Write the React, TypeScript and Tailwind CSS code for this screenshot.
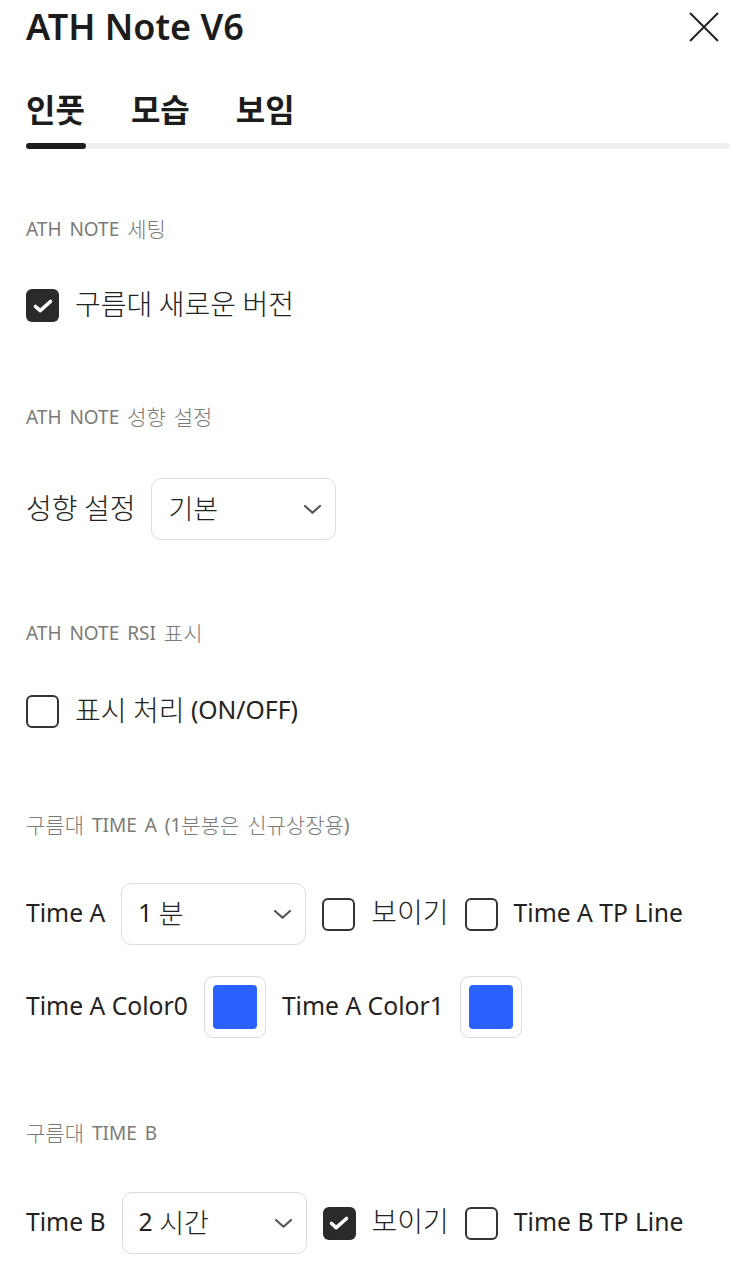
import React from "react";

const font = { fontFamily: '"Noto Sans", "Noto Sans CJK KR", sans-serif' };

// hangul runs get their own size: the latin and korean faces differ in width
function Mixed({ text, ko, en }: { text: string; ko: string; en: string }) {
  const parts = text.split(/([\u3131-\uD79D]+)/).filter((p) => p !== "");
  return (
    <>
      {parts.map((p, i) => (
        <span key={i} className={/[\u3131-\uD79D]/.test(p) ? ko : en}>
          {p}
        </span>
      ))}
    </>
  );
}

function Label({ text }: { text: string }) {
  return (
    <span className="whitespace-pre leading-[33px] text-[#222]">
      <Mixed text={text} ko="align-[-2px] text-[28px] font-light" en="text-[24.7px]" />
    </span>
  );
}

function Check({ on }: { on?: boolean }) {
  if (on) {
    return (
      <span className="flex h-[33px] w-[33px] shrink-0 items-center justify-center rounded-[6px] bg-[#2a2a2a]">
        <svg width="22" height="22" viewBox="0 0 22 22" fill="none">
          <path d="M3.5 11.5 L8.2 15.6 L18.5 6.5" stroke="#fff" strokeWidth="3.6" strokeLinecap="round" strokeLinejoin="round" />
        </svg>
      </span>
    );
  }
  return <span className="block h-[33px] w-[33px] shrink-0 rounded-[6px] border-2 border-[#333333] bg-white" />;
}

function Chevron() {
  return (
    <svg width="19" height="11" viewBox="0 0 19 11" fill="none">
      <path d="M2 2 L9.5 8.8 L17 2" stroke="#555" strokeWidth="2.2" strokeLinecap="round" strokeLinejoin="round" />
    </svg>
  );
}

function Select({ value }: { value: string }) {
  return (
    <div className="flex h-[62px] w-[185px] shrink-0 items-center justify-between rounded-[10px] border border-[#dcdcdc] pl-[16px] pr-[13px]">
      <span className="whitespace-pre text-[#222]">
        <Mixed text={value} ko="align-[-2px] text-[27px] font-light" en="text-[24.7px]" />
      </span>
      <Chevron />
    </div>
  );
}

function Swatch() {
  return (
    <div className="flex h-[62px] w-[62px] shrink-0 items-center justify-center rounded-[9px] border border-[#dcdcdc]">
      <div className="h-[44px] w-[44px] rounded-[4px] bg-[#2962ff]" />
    </div>
  );
}

function Heading({ text, className }: { text: string; className: string }) {
  return (
    <div className={"h-6 whitespace-pre leading-6 text-[#7a7a7a] [word-spacing:3px] " + className}>
      <Mixed text={text} ko="align-[-1px] text-[21px] font-light" en="text-[19px]" />
    </div>
  );
}

function CheckRow({ on, label }: { on?: boolean; label: string }) {
  return (
    <div className="flex h-[33px] items-center gap-4">
      <Check on={on} />
      <Label text={label} />
    </div>
  );
}

export default function App() {
  return (
    <div className="min-h-[1280px] bg-white pl-[26px] pr-[14px]" style={font}>
      <div className="flex h-[54px] items-center justify-between">
        <h1 className="text-[36px] font-semibold leading-[54px] text-[#1c1c1c]">ATH Note V6</h1>
        <svg width="32" height="32" viewBox="0 0 32 32" fill="none" className="mr-[10px]">
          <path d="M2 2 L30 30 M30 2 L2 30" stroke="#222" strokeWidth="2" />
        </svg>
      </div>

      <div className="mt-[38px] flex h-[36px] items-center gap-[46px] text-[32px] font-bold leading-[36px] text-[#1c1c1c]">
        <span>인풋</span>
        <span>모습</span>
        <span>보임</span>
      </div>
      <div className="mt-[15px] h-[6px] w-full rounded-full bg-[#f0f0f0]">
        <div className="h-[6px] w-[60px] rounded-full bg-[#1e1e1e]" />
      </div>

      <Heading className="mt-[68px]" text="ATH NOTE 세팅" />
      <div className="mt-[48px]">
        <CheckRow on label="구름대 새로운 버전" />
      </div>

      <Heading className="mt-[83px]" text="ATH NOTE 성향 설정" />
      <div className="mt-[49px] flex h-[62px] items-center gap-4">
        <Label text="성향 설정" />
        <Select value="기본" />
      </div>

      <Heading className="mt-[81px]" text="ATH NOTE RSI 표시" />
      <div className="mt-[50px]">
        <CheckRow label="표시 처리 (ON/OFF)" />
      </div>

      <Heading className="mt-[85px]" text="구름대 TIME A (1분봉은 신규상장용)" />
      <div className="mt-[46px] flex h-[62px] items-center gap-4">
        <Label text="Time A" />
        <Select value="1 분" />
        <CheckRow label="보이기" />
        <CheckRow label="Time A TP Line" />
      </div>
      <div className="mt-[31px] flex h-[62px] items-center gap-4">
        <Label text="Time A Color0" />
        <Swatch />
        <Label text="Time A Color1" />
        <Swatch />
      </div>

      <Heading className="mt-[83px]" text="구름대 TIME B" />
      <div className="mt-[47px] flex h-[62px] items-center gap-4">
        <Label text="Time B" />
        <Select value="2 시간" />
        <CheckRow on label="보이기" />
        <CheckRow label="Time B TP Line" />
      </div>
    </div>
  );
}
